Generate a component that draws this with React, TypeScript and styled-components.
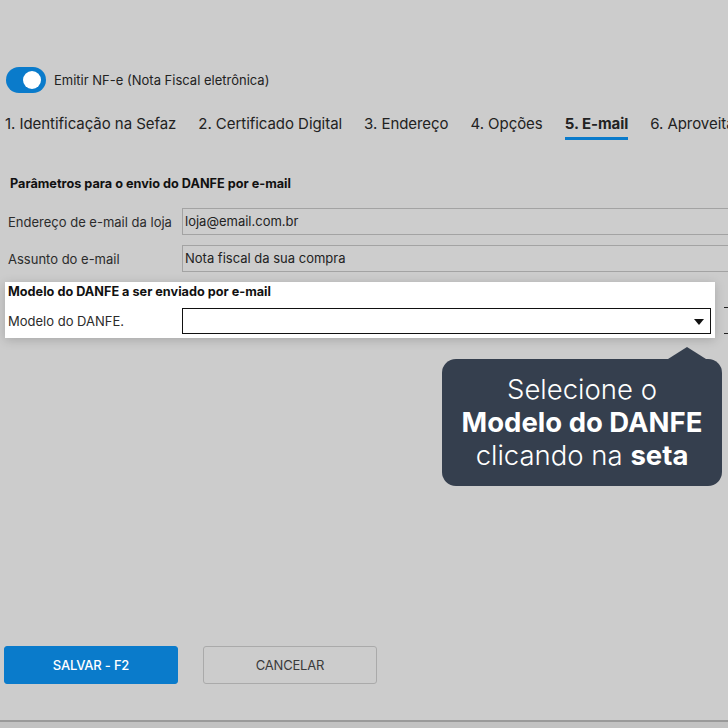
import React from "react";
import styled, { createGlobalStyle } from "styled-components";

const GlobalStyle = createGlobalStyle`
  html, body {
    margin: 0;
    padding: 0;
    background: #cccccc;
    font-family: Inter, "Noto Sans", "Liberation Sans", sans-serif;
    color: #1f1f1f;
  }
  * {
    box-sizing: border-box;
  }
`;

const Page = styled.div`
  position: relative;
  width: 728px;
  height: 728px;
  overflow: hidden;
  display: flex;
  flex-direction: column;
  padding-top: 67px;
`;

const ToggleRow = styled.label`
  display: flex;
  align-items: center;
  gap: 8px;
  padding-left: 6px;
  height: 26px;
  font-size: 13px;
  color: #222;
`;

const Switch = styled.span`
  position: relative;
  width: 40px;
  height: 26px;
  border-radius: 13px;
  background: #0a7bcb;
  flex-shrink: 0;

  &::after {
    content: "";
    position: absolute;
    top: 4px;
    right: 5px;
    width: 18px;
    height: 18px;
    border-radius: 50%;
    background: #ffffff;
  }
`;

const Tabs = styled.nav`
  display: flex;
  gap: 22px;
  margin-top: 21px;
  padding-left: 5px;
  white-space: nowrap;
  overflow: hidden;
`;

const Tab = styled.span<{ $active?: boolean }>`
  font-size: 15px;
  line-height: 20px;
  letter-spacing: -0.05px;
  padding-bottom: 3px;
  color: #222;
  font-weight: ${(p) => (p.$active ? 700 : 400)};
  border-bottom: 3px solid ${(p) => (p.$active ? "#0a7bcb" : "transparent")};
`;

const Form = styled.section`
  margin-top: 36px;
  padding-left: 5px;
  display: flex;
  flex-direction: column;
`;

const SectionTitle = styled.h3<{ $inset?: number }>`
  margin: 0;
  padding-left: ${(p) => p.$inset ?? 5}px;
  font-size: 12.7px;
  line-height: 16px;
  font-weight: 700;
  color: #111;
`;

const FormRow = styled.div<{ $top?: number }>`
  display: grid;
  grid-template-columns: 177px 1fr;
  align-items: center;
  margin-top: ${(p) => p.$top ?? 10}px;
`;

const Label = styled.span`
  padding-left: 3px;
  font-size: 13px;
  color: #2b2b2b;
`;

const TextInput = styled.div`
  height: 27px;
  margin-right: -20px;
  padding: 4px 2px;
  border: 1px solid #a3a3a3;
  background: #cdcdcd;
  font-size: 13px;
  color: #222;
`;

const HighlightRow = styled.div`
  display: flex;
  gap: 9px;
  margin-top: 10px;
`;

const HighlightPanel = styled.div`
  width: 710px;
  flex-shrink: 0;
  background: #ffffff;
  padding: 2px 4px 4px 0;
  box-shadow: 0 2px 10px rgba(0, 0, 0, 0.18);
`;

const Select = styled.div`
  position: relative;
  height: 26px;
  border: 1px solid #111;
  background: #ffffff;

  &::after {
    content: "";
    position: absolute;
    right: 6px;
    top: 10px;
    border-left: 5px solid transparent;
    border-right: 5px solid transparent;
    border-top: 6px solid #111;
  }
`;

const SelectTail = styled.div`
  flex: 1;
  align-self: flex-end;
  margin-bottom: 4px;
  height: 27px;
  border-top: 1px solid #222;
  border-bottom: 1px solid #222;
`;

const Tooltip = styled.div`
  position: absolute;
  left: 442px;
  top: 359px;
  width: 280px;
  height: 127px;
  border-radius: 14px;
  background: #353f4e;
  color: #ffffff;
  display: flex;
  flex-direction: column;
  justify-content: center;
  align-items: center;
  font-size: 27.5px;
  line-height: 33px;
  font-weight: 300;
  text-align: center;
  white-space: nowrap;

  &::before {
    content: "";
    position: absolute;
    top: -12px;
    left: 226px;
    border-left: 19px solid transparent;
    border-right: 19px solid transparent;
    border-bottom: 12px solid #353f4e;
  }

  b {
    font-weight: 700;
  }
`;

const Actions = styled.div`
  margin-top: auto;
  display: flex;
  gap: 25px;
  padding-left: 4px;
  margin-bottom: 36px;
`;

const ActionButton = styled.button<{ $primary?: boolean }>`
  width: 174px;
  height: 38px;
  border-radius: 3px;
  border: 1px solid ${(p) => (p.$primary ? "#0a7bcb" : "#aaaaaa")};
  background: ${(p) => (p.$primary ? "#0a7bcb" : "transparent")};
  color: ${(p) => (p.$primary ? "#ffffff" : "#3a3a3a")};
  font-family: Inter, "Liberation Sans", sans-serif;
  font-size: 13px;
  font-weight: ${(p) => (p.$primary ? 500 : 400)};
  letter-spacing: -0.2px;
`;

const StatusBar = styled.div`
  height: 8px;
  border-top: 2px solid #9a9a9a;
  background: #c2c2c2;
`;

const tabs = [
  "1. Identificação na Sefaz",
  "2. Certificado Digital",
  "3. Endereço",
  "4. Opções",
  "5. E-mail",
  "6. Aproveitamento",
];

export default function App() {
  return (
    <>
      <GlobalStyle />
      <Page>
        <ToggleRow>
          <Switch />
          Emitir NF-e (Nota Fiscal eletrônica)
        </ToggleRow>

        <Tabs>
          {tabs.map((t) => (
            <Tab key={t} $active={t === "5. E-mail"}>
              {t}
            </Tab>
          ))}
        </Tabs>

        <Form>
          <SectionTitle>Parâmetros para o envio do DANFE por e-mail</SectionTitle>
          <FormRow $top={16}>
            <Label>Endereço de e-mail da loja</Label>
            <TextInput>loja@email.com.br</TextInput>
          </FormRow>
          <FormRow>
            <Label>Assunto do e-mail</Label>
            <TextInput>Nota fiscal da sua compra</TextInput>
          </FormRow>

          <HighlightRow>
            <HighlightPanel>
              <SectionTitle $inset={3}>
                Modelo do DANFE a ser enviado por e-mail
              </SectionTitle>
              <FormRow $top={8}>
                <Label>Modelo do DANFE.</Label>
                <Select />
              </FormRow>
            </HighlightPanel>
            <SelectTail />
          </HighlightRow>
        </Form>

        <Tooltip>
          <span>Selecione o</span>
          <b>Modelo do DANFE</b>
          <span>
            clicando na <b>seta</b>
          </span>
        </Tooltip>

        <Actions>
          <ActionButton $primary>SALVAR - F2</ActionButton>
          <ActionButton>CANCELAR</ActionButton>
        </Actions>
        <StatusBar />
      </Page>
    </>
  );
}
